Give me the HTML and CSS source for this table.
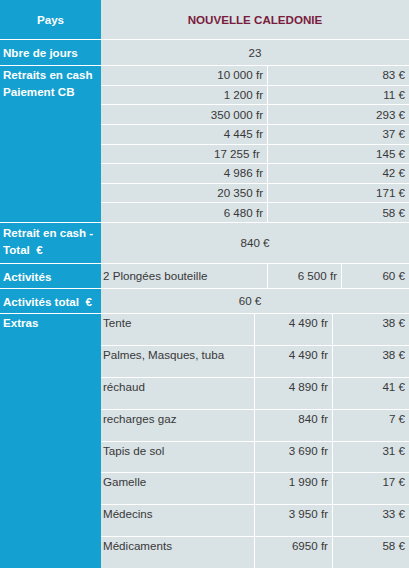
FILE: index.html
```html
<!DOCTYPE html>
<html lang="fr">
<head>
<meta charset="utf-8">
<title>Nouvelle Calédonie</title>
<link rel="stylesheet" href="styles.css">
</head>
<body>
<div class="sheet">
  <div class="label head">Pays</div>
  <div class="cell center country">NOUVELLE CALEDONIE</div>

  <div class="label mid">Nbre de jours</div>
  <div class="cell center">23</div>

  <div class="label top">Retraits en cash<br>Paiement CB</div>
  <div class="sub retraits">
    <div class="cell right">10 000 fr</div><div class="cell right">83 €</div>
    <div class="cell right">1 200 fr</div><div class="cell right">11 €</div>
    <div class="cell right">350 000 fr</div><div class="cell right">293 €</div>
    <div class="cell right">4 445 fr</div><div class="cell right">37 €</div>
    <div class="cell right">17 255 fr&nbsp;</div><div class="cell right">145 €</div>
    <div class="cell right">4 986 fr</div><div class="cell right">42 €</div>
    <div class="cell right">20 350 fr</div><div class="cell right">171 €</div>
    <div class="cell right">6 480 fr</div><div class="cell right">58 €</div>
  </div>

  <div class="label mid total">Retrait en cash -<br>Total&nbsp; €</div>
  <div class="cell center">840 €</div>

  <div class="label mid">Activités</div>
  <div class="sub activites">
    <div class="cell left">2 Plongées bouteille</div>
    <div class="cell right">6 500 fr</div>
    <div class="cell right">60 €</div>
  </div>

  <div class="label mid">Activités total&nbsp; €</div>
  <div class="cell center shift">60 €</div>

  <div class="label top">Extras</div>
  <div class="sub extras">
    <div class="cell left">Tente</div><div class="cell right">4 490 fr</div><div class="cell right">38 €</div>
    <div class="cell left">Palmes, Masques, tuba</div><div class="cell right">4 490 fr</div><div class="cell right">38 €</div>
    <div class="cell left">réchaud</div><div class="cell right">4 890 fr</div><div class="cell right">41 €</div>
    <div class="cell left">recharges gaz</div><div class="cell right">840 fr</div><div class="cell right">7 €</div>
    <div class="cell left">Tapis de sol</div><div class="cell right">3 690 fr</div><div class="cell right">31 €</div>
    <div class="cell left">Gamelle</div><div class="cell right">1 990 fr</div><div class="cell right">17 €</div>
    <div class="cell left">Médecins</div><div class="cell right">3 950 fr</div><div class="cell right">33 €</div>
    <div class="cell left">Médicaments</div><div class="cell right">6950 fr</div><div class="cell right">58 €</div>
  </div>
</div>
</body>
</html>
```
FILE: styles.css
```css
html, body {
  margin: 0;
  padding: 0;
  background: #ffffff;
}

body {
  font-family: "Liberation Sans", Arial, Helvetica, sans-serif;
  font-size: 11.6px;
  color: #383838;
}

.sheet {
  width: 409px;
  height: 568px;
  display: grid;
  grid-template-columns: 101px 308px;
  grid-template-rows: 39px 25px 156px 40px 24px 24px 254px;
  row-gap: 1px;
  background: #ffffff;
  overflow: hidden;
}

.label {
  background: #14a0d0;
  color: #ffffff;
  font-weight: bold;
  line-height: 17px;
  padding: 0 3px;
  display: flex;
  flex-direction: column;
}

.label.head {
  align-items: center;
  justify-content: center;
}

.label.mid {
  justify-content: center;
}

.label.total {
  padding-bottom: 4px;
}

.label.top {
  justify-content: flex-start;
}

.cell {
  background: #d9e2e5;
  display: flex;
  align-items: center;
  line-height: 14px;
  white-space: nowrap;
}

.cell.center {
  justify-content: center;
}

.cell.shift {
  padding-right: 10px;
}

.cell.left {
  justify-content: flex-start;
  padding-left: 2px;
}

.cell.right {
  justify-content: flex-end;
  padding-right: 4px;
}

.country {
  color: #7a1c3c;
  font-weight: bold;
}

.sub {
  display: grid;
  gap: 1px;
  background: #ffffff;
}

.retraits {
  grid-template-columns: 166px 1fr;
  grid-template-rows: repeat(8, 1fr);
}

.activites {
  grid-template-columns: 166px 73px 1fr;
}

.extras {
  grid-template-columns: 153px 77px 1fr;
  grid-template-rows: repeat(8, 1fr);
}

.extras .cell {
  align-items: flex-start;
  padding-top: 2px;
}
```
